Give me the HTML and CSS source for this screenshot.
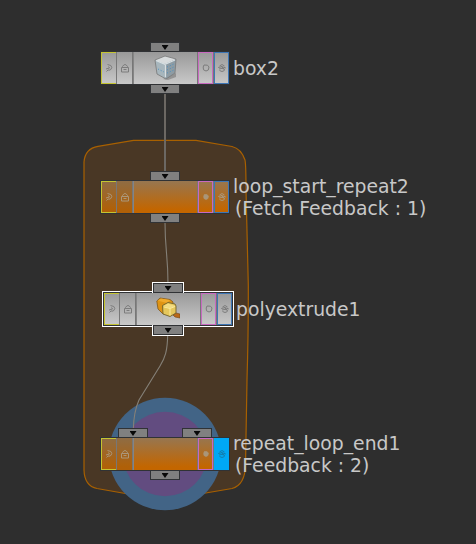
FILE: index.html
```html
<!DOCTYPE html>
<html lang="en">
<head>
<meta charset="utf-8">
<title>Network editor</title>
<link rel="stylesheet" href="styles.css">
</head>
<body>
<svg class="defs" width="0" height="0" aria-hidden="true">
  <symbol id="bypass" viewBox="0 0 10 10"><path d="M3.500 1.500Q8 2 7.800 4.500 7.500 7 4.500 7.500M4.500 3.500 5.500 5 2 6M2.500 8.500 4.500 6.500"/></symbol>
  <symbol id="lock" viewBox="0 0 10 10"><path d="M2.500 4.500V3.500Q5 -.5 7.500 3.500V4.500M1.500 4.500h7v4.500h-7zM3.500 6.500h3"/></symbol>
  <symbol id="template" viewBox="0 0 10 10"><path d="M3 2 6.500 2.200 8 4 7.300 7 5 8 2.500 6.800 2.200 4z"/></symbol>
  <symbol id="display" viewBox="0 0 10 10"><path d="M2.500 3Q5 0 7.500 3M1.200 4.500Q5 2.500 8.800 5M2 6Q5 4.500 8 6.500M2.500 7.500Q5 9.500 7.500 7.500M4 3l3 3"/></symbol>
</svg>
<main class="network">
  <svg class="layer" width="476" height="544" viewBox="0 0 476 544">
    <path class="group" d="M133.500 140.300H196L232 146.500Q241 148.500 245 160Q246 165 246 190L248.300 285Q248.500 330 247 380L245.500 465Q245 485 232 488.500L197 494.500L165 500L131 494.500L97 488.500Q84.500 486 84 470V162Q85 148.500 98 146.300Z"/>
    <circle class="ring" cx="165" cy="454" r="56.300"/>
    <circle class="core" cx="165" cy="454" r="42.300"/>
    <path class="wire straight" d="M165 93V172"/>
    <path class="wire" d="M165 222C165 252 168 254 168 284"/>
    <path class="wire" d="M167.700 334C167.500 351 165 358 160 366L139 400C134.500 410 133.500 418 133.300 430"/>
  </svg>

  <section class="node box">
    <div class="tabs"><i class="tab"></i></div>
    <div class="body">
      <span class="flag bypass"><svg><use href="#bypass"/></svg></span>
      <span class="flag lock"><svg><use href="#lock"/></svg></span>
      <span class="face"><svg class="picture" viewBox="0 0 24 26">
        <path fill="#444" opacity=".35" d="M9 24 22 18 22 22 14 25z"/>
        <path fill="#d8dcdd" d="M1 5 11 1 22 4 11 9z"/>
        <path fill="#a7b6bd" d="M1 5 11 9 12 24 3 19z"/>
        <path fill="#8e9ca4" d="M11 9 22 4 21 18 12 24z"/>
        <path fill="none" stroke="#777" stroke-width=".8" d="M1 5 11 1 22 4 21 18 12 24 3 19z"/>
        <path fill="none" stroke="#d8e0e3" stroke-width="1.200" d="M2 5.500 11 9.300 21 5M11.500 10v12"/>
        <path fill="none" stroke="#4c8fc0" stroke-dasharray="1 2" d="M13 12 20 9M13 15 20 12M13 18 20 15M4 14 10 17"/>
      </svg></span>
      <span class="flag template"><svg><use href="#template"/></svg></span>
      <span class="flag display"><svg><use href="#display"/></svg></span>
    </div>
    <div class="tabs"><i class="tab"></i></div>
    <p class="label">box2</p>
  </section>

  <section class="node loop start">
    <div class="tabs"><i class="tab"></i></div>
    <div class="body">
      <span class="flag bypass"><svg><use href="#bypass"/></svg></span>
      <span class="flag lock"><svg><use href="#lock"/></svg></span>
      <span class="face"></span>
      <span class="flag template"><svg><use href="#template"/></svg></span>
      <span class="flag display"><svg><use href="#display"/></svg></span>
    </div>
    <div class="tabs"><i class="tab"></i></div>
    <p class="label">loop_start_repeat2<span class="detail">(Fetch Feedback : 1)</span></p>
  </section>

  <section class="node extrude selected">
    <div class="tabs"><i class="tab"></i></div>
    <div class="body">
      <span class="flag bypass"><svg><use href="#bypass"/></svg></span>
      <span class="flag lock"><svg><use href="#lock"/></svg></span>
      <span class="face"><svg class="picture" viewBox="0 0 24 26">
        <path fill="#df9414" stroke="#80571c" stroke-width=".8" d="M.8 6 4 3 14 4.500 17 7 16 16 7 19 2 14z"/>
        <path fill="#efaa2c" d="M2 5.800 5 3.600 14 5 11 8z"/>
        <path fill="#b96819" stroke="#704415" stroke-width=".6" d="M17 20 20 18 24 19V23L19 22z"/>
        <path fill="#e5c75c" stroke="#6f6129" stroke-width=".9" d="M6.500 10.500 12 7.500 19 9 20 11V18L14 21.500 7 19z"/>
        <path fill="#f2dc83" d="M7.500 11 12 8.500 19.500 11 14 13.300z"/>
        <path fill="none" stroke="#fae99b" d="M14 13.500V20.500M8 12 14 13.500 19 11.500"/>
      </svg></span>
      <span class="flag template"><svg><use href="#template"/></svg></span>
      <span class="flag display"><svg><use href="#display"/></svg></span>
    </div>
    <div class="tabs"><i class="tab"></i></div>
    <p class="label">polyextrude1</p>
  </section>

  <section class="node loop end">
    <div class="tabs"><i class="tab"></i><i class="tab"></i></div>
    <div class="body">
      <span class="flag bypass"><svg><use href="#bypass"/></svg></span>
      <span class="flag lock"><svg><use href="#lock"/></svg></span>
      <span class="face"></span>
      <span class="flag template"><svg><use href="#template"/></svg></span>
      <span class="flag display on"><svg><use href="#display"/></svg></span>
    </div>
    <div class="tabs"><i class="tab"></i></div>
    <p class="label">repeat_loop_end1<span class="detail">(Feedback : 2)</span></p>
  </section>
</main>
</body>
</html>
```
FILE: styles.css
```css
body {
  margin: 0;
  background: #2e2e2e;
}

.defs {
  position: absolute;
}

.network {
  position: relative;
  width: 476px;
  height: 544px;
  overflow: hidden;
  background: #2e2e2e;
  font: 18.8px/22px "DejaVu Sans", sans-serif;
  color: #c8c8c8;
}

.layer {
  display: block;
}

.group {
  fill: #493725;
  stroke: #a86000;
  stroke-width: 1.2;
}

.ring { fill: #426486; }
.core { fill: #624c80; }

.wire {
  fill: none;
  stroke: #858078;
  stroke-width: 1.1;
}

.wire.straight {
  stroke: #6c6863;
  stroke-width: 2;
}

/* Nodes are placed freely on the canvas. */
.node {
  position: absolute;
  left: 100px;
  width: 130px;
}

.box { top: 42px; }
.start { top: 171px; }
.extrude { top: 283px; left: 103px; }
.end { top: 428px; }

.tabs {
  display: flex;
  justify-content: center;
  gap: 34px;
  height: 9px;
}

.tab {
  display: flex;
  justify-content: center;
  box-sizing: border-box;
  width: 30px;
  height: 10px;
  border: 1px solid #303235;
  background: #808080;
}

.body + .tabs .tab {
  margin-top: -1px;
}

.tab::before {
  content: "";
  width: 7px;
  height: 5px;
  margin-top: 2px;
  background: #080808;
  clip-path: polygon(0 0, 100% 0, 50% 100%);
}

.body {
  display: flex;
  box-sizing: border-box;
  height: 34px;
  border: 1px solid #303235;
  background: linear-gradient(#999, #c9c9c9);
}

.loop .body {
  background: linear-gradient(#977650, #c36600 90%);
}

.flag {
  display: flex;
  align-items: center;
  justify-content: center;
  box-sizing: border-box;
  width: 16px;
  border: 1px solid transparent;
}

.flag svg {
  flex: none;
  width: 10px;
  height: 10px;
  fill: none;
  stroke: #7c7c7c;
  stroke-width: 1;
}

.loop .flag svg { stroke: #ab977a; }
.loop .flag.bypass,
.loop .flag.lock { background: rgb(120 80 30 / 25%); }

.loop .flag.template svg {
  width: 8px;
  height: 8px;
  fill: #a99679;
}

.flag.bypass {
  border-color: #c5c431;
  border-right: 0;
  width: 15px;
}

.flag.lock {
  border-width: 0 1px;
  border-color: #777;
  width: 17px;
}

.flag.template,
.flag.display {
  width: 15px;
  margin-left: 1px;
}

.flag.template {
  border-color: #c869c0;
  box-shadow: -1px 0 #777, 1px 0 #777;
}

.flag.display { border-color: #3e76b5; }

.loop .flag.display.on {
  border-color: #00a8f5;
  background: #00a8f5;
}

.loop .flag.display.on svg { stroke: #137fb0; }

.face {
  display: flex;
  align-items: center;
  justify-content: center;
  box-sizing: border-box;
  width: 64px;
  border-left: 1px solid #858585;
}

.picture {
  width: 24px;
  height: 26px;
}

.extrude .picture {
  margin: 0 2px 2px 0;
}

.selected .body,
.selected .tab {
  box-shadow: 0 0 0 1px #fff;
}

/* The tab covers the body's outline where the two meet. */
.selected .tab {
  position: relative;
  z-index: 1;
  clip-path: inset(-1px -1px 0 -1px);
}

.selected .body + .tabs .tab {
  clip-path: inset(0 -1px -1px -1px);
}

.label {
  position: absolute;
  left: 133px;
  top: 16px;
  margin: 0;
  white-space: nowrap;
}

.start .label,
.end .label { top: 5px; }

.detail {
  display: block;
  padding-left: 2px;
}
```
